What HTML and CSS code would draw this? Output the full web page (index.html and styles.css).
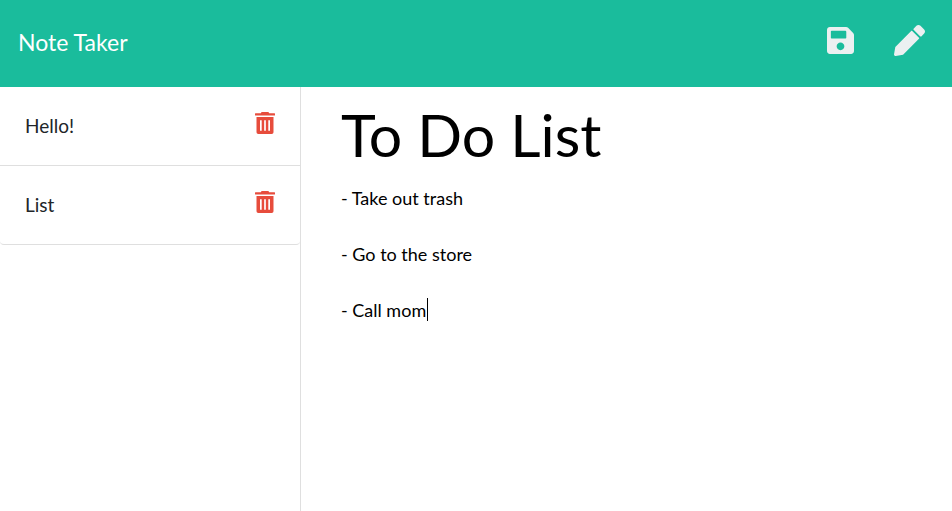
FILE: index.html
```html
<!DOCTYPE html>
<html lang="en">
<head>
<meta charset="utf-8">
<title>Note Taker</title>
<link rel="stylesheet" href="styles.css">
</head>
<body>
<header class="navbar">
  <a class="brand" href="#">Note Taker</a>
  <div class="actions">
    <button class="icon-button" type="button" aria-label="Save note">
      <svg class="icon save" viewBox="0 0 448 512" aria-hidden="true"><path d="M433.941 129.941l-83.882-83.882A48 48 0 0 0 316.118 32H48C21.49 32 0 53.49 0 80v352c0 26.51 21.49 48 48 48h352c26.51 0 48-21.49 48-48V163.882a48 48 0 0 0-14.059-33.941zM224 416c-35.346 0-64-28.654-64-64 0-35.346 28.654-64 64-64s64 28.654 64 64c0 35.346-28.654 64-64 64zm96-304.52V212c0 6.627-5.373 12-12 12H76c-6.627 0-12-5.373-12-12V108c0-6.627 5.373-12 12-12h228.52c3.183 0 6.235 1.264 8.485 3.515l3.48 3.48A11.996 11.996 0 0 1 320 111.48z"/></svg>
    </button>
    <button class="icon-button" type="button" aria-label="New note">
      <svg class="icon pen" viewBox="0 0 512 512" aria-hidden="true"><path d="M497.900 142.100l-46.100 46.100c-4.700 4.700-12.300 4.700-17 0l-111-111c-4.700-4.700-4.700-12.300 0-17l46.100-46.100c18.700-18.700 49.100-18.700 67.900 0l60.100 60.100c18.800 18.700 18.800 49.100 0 67.900zM284.200 99.800L21.600 362.400.4 483.900c-2.900 16.400 11.400 30.600 27.800 27.800l121.500-21.300 262.600-262.600c4.700-4.700 4.700-12.300 0-17l-111-111c-4.800-4.700-12.400-4.700-17.100 0z"/></svg>
    </button>
  </div>
</header>
<main class="layout">
  <aside class="sidebar">
    <ul class="notes">
      <li class="note">
        <span class="note-title">Hello!</span>
        <button class="icon-button" type="button" aria-label="Delete Hello!">
          <svg class="icon trash" viewBox="0 0 20 22" aria-hidden="true"><path fill-rule="evenodd" d="M6.600 0h6.800l.8 1.200H19.500q.5 0 .5.500v1.400q0 .5-.5.500H.5Q0 3.600 0 3.100V1.700q0-.5.500-.5h5.300zM1.500 5h17v15.200q0 1.800-1.800 1.800H3.300q-1.800 0-1.800-1.800zM5 8.200v10.600h1.700V8.200zm4.150 0v10.600h1.700V8.200zm4.150 0v10.600H15V8.200z"/></svg>
        </button>
      </li>
      <li class="note">
        <span class="note-title">List</span>
        <button class="icon-button" type="button" aria-label="Delete List">
          <svg class="icon trash" viewBox="0 0 20 22" aria-hidden="true"><path fill-rule="evenodd" d="M6.600 0h6.800l.8 1.200H19.500q.5 0 .5.500v1.400q0 .5-.5.500H.5Q0 3.600 0 3.100V1.700q0-.5.500-.5h5.300zM1.500 5h17v15.200q0 1.800-1.800 1.800H3.300q-1.800 0-1.800-1.800zM5 8.200v10.600h1.700V8.200zm4.150 0v10.600h1.700V8.200zm4.150 0v10.600H15V8.200z"/></svg>
        </button>
      </li>
    </ul>
  </aside>
  <section class="editor">
    <input class="title-input" type="text" aria-label="Note title" value="To Do List">
    <div class="text-field">
      <textarea class="text-input" aria-label="Note text">- Take out trash

- Go to the store

- Call mom</textarea>
      <span class="caret" aria-hidden="true"></span>
    </div>
  </section>
</main>
</body>
</html>
```
FILE: styles.css
```css
* { box-sizing: border-box; }
body {
  margin: 0;
  min-height: 100vh;
  display: flex;
  flex-direction: column;
  background: #fff;
  color: #212529;
  font-family: Lato, "Liberation Sans", sans-serif;
  font-size: 19px;
  line-height: 28px;
}
.navbar {
  display: flex;
  align-items: flex-start;
  justify-content: space-between;
  padding: 25px 27px 27px 18px;
  background: #1abc9c;
}
.brand {
  color: #fff;
  font-size: 23px;
  line-height: 35px;
  text-decoration: none;
}
.actions { display: flex; gap: 40px; }
.icon-button {
  display: flex;
  padding: 0;
  border: 0;
  background: none;
  color: inherit;
  cursor: pointer;
}
.icon { display: block; fill: currentColor; }
.actions .icon-button { color: #ecf0f1; }
.save { width: 27px; height: 31px; }
.pen { width: 31px; height: 31px; }
.trash { width: 20px; height: 22px; }
.layout { flex: 1; display: flex; }
.sidebar {
  flex: 0 0 301px;
  border-right: 1px solid #dfdfdf;
}
.notes {
  margin: 0;
  padding: 0;
  list-style: none;
  border-bottom: 1px solid #dfdfdf;
  border-radius: 0 0 4px 4px;
}
.note {
  display: flex;
  justify-content: space-between;
  align-items: flex-start;
  padding: 25px;
}
.note + .note { border-top: 1px solid #dfdfdf; }
.note .icon-button { color: #e74c3c; }
.editor {
  flex: 1;
  min-width: 0;
  display: flex;
  flex-direction: column;
  gap: 13px;
  padding: 12px 40px;
}
.title-input, .text-input {
  width: 100%;
  padding: 0;
  border: 0;
  outline: 0;
  background: none;
  color: #000;
  font-family: inherit;
}
.title-input { font-size: 59px; line-height: 72px; height: 72px; }
.text-field { flex: 1; position: relative; display: flex; }
.text-input {
  font-size: 18px;
  line-height: 28px;
  resize: none;
  caret-color: transparent;
}
/* Insertion point at the end of the fifth line */
.caret {
  position: absolute;
  left: 86px;
  top: 114px;
  width: 1px;
  height: 23px;
  background: #000;
}
```
